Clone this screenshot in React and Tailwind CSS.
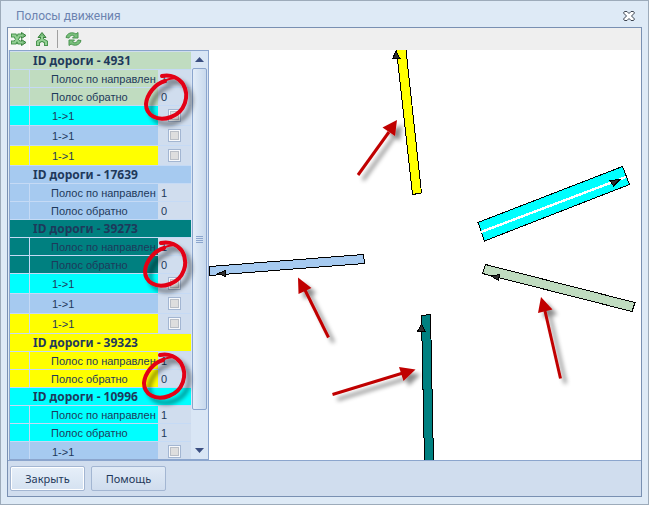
import { useState } from "react";

const GREEN = "bg-[#c0dcc0]";
const CYAN = "bg-[#00ffff]";
const BLUE = "bg-[#a6caf0]";
const YELLOW = "bg-[#ffff00]";
const TEAL = "bg-[#008080]";

const ROADS = [
  { id: 4931, color: GREEN, forward: 1, back: 0, links: [CYAN, BLUE, YELLOW] },
  { id: 17639, color: BLUE, forward: 1, back: 0, links: [] },
  { id: 39273, color: TEAL, forward: 1, back: 0, links: [CYAN, BLUE, YELLOW] },
  { id: 39323, color: YELLOW, forward: 1, back: 0, links: [] },
  { id: 10996, color: CYAN, forward: 1, back: 1, links: [BLUE] },
];

function PropRow({ color, label, value }) {
  return (
    <tr className="h-[18px]">
      <td className={`border-b border-r border-[#c5daf5] ${color}`} />
      <td className={`border-b border-[#c5daf5] pl-[21px] pr-[2px] ${color}`}>
        <div className="overflow-hidden whitespace-nowrap">{label}</div>
      </td>
      <td className="border-b border-[#c5daf5] bg-[#d0ddee] pl-[3px]">{value}</td>
    </tr>
  );
}

function LinkRow({ color, name }) {
  const [on, setOn] = useState(false);
  return (
    <tr className="h-5">
      <td className={`border-b border-r border-[#c5daf5] ${color}`} />
      <td className={`border-b border-[#c5daf5] pl-[22px] ${color}`}>
        <label htmlFor={name}>1-&gt;1</label>
      </td>
      <td className="border-b border-[#c5daf5] bg-[#d0ddee]">
        <input
          id={name}
          type="checkbox"
          checked={on}
          onChange={(e) => setOn(e.target.checked)}
          className="mx-auto block size-[13px] appearance-none border border-[#a3b6d2] bg-[#dedede] shadow-[inset_0_0_0_1px_#f6f8fb,inset_0_0_0_2px_#b9bec6] checked:bg-[#7a90b0]"
        />
      </td>
    </tr>
  );
}

function RoadRows({ road }) {
  return (
    <>
      <tr className="h-[18px]">
        <th colSpan={3} className={`border-b border-[#c5daf5] pl-[23px] text-left font-['Noto_Sans',sans-serif] text-[12px] font-bold ${road.color}`}>
          ID дороги - {road.id}
        </th>
      </tr>
      <PropRow color={road.color} label="Полос по направлени" value={road.forward} />
      <PropRow color={road.color} label="Полос обратно" value={road.back} />
      {road.links.map((color, i) => (
        <LinkRow key={i} color={color} name={`link-${road.id}-${i}`} />
      ))}
    </>
  );
}

function Toolbar() {
  return (
    <div className="flex h-[22px] shrink-0 items-center bg-[#efefef]">
      <button aria-label="Переходы" className="flex h-[22px] w-[22px] items-center justify-center border-r border-white bg-[#f8f8f8]">
        <svg width="17" height="14" viewBox="0 0 17 14" fill="none">
          <path d="M1 3.5H5L9 10.5H12M1 10.5H5L9 3.5H12" stroke="#4a9450" strokeWidth="4" />
          <path d="M11.5 .5L16 3.5L11.5 6.5ZM11.5 7.5L16 10.5L11.5 13.5Z" fill="#75b978" stroke="#38803c" />
          <path d="M2 3.5H5L9 10.5H12.5M2 10.5H5L9 3.5H12.5" stroke="#93d094" strokeWidth="2" />
        </svg>
      </button>
      <button aria-label="Слияние" className="flex h-[22px] w-[23px] items-center justify-center">
        <svg width="14" height="14" viewBox="0 0 14 14" fill="none">
          <path d="M3 14V10L7 7.5L11 10V14M7 8V4" stroke="#4a9450" strokeWidth="4" />
          <path d="M3 5.5L7 .5L11 5.5Z" fill="#75b978" stroke="#38803c" />
          <path d="M3 13V10L7 7.5L11 10V13M7 8V4" stroke="#93d094" strokeWidth="2" />
        </svg>
      </button>
      <div className="ml-1 h-[18px] w-px bg-[#a0a0a0]" />
      <button aria-label="Обновить" className="flex h-[22px] w-[31px] items-center justify-center">
        <svg width="17" height="16" viewBox="0 0 17 16" fill="#79c07c" stroke="#4a9450">
          <path d="M1 6.5C2 2 7 .5 11 3L13 1.5V7H7.5L9.5 5C7 3.5 5 4.5 4 7Z" />
          <path d="M16 9.5C15 14 10 15.5 6 13L4 14.5V9H9.5L7.5 11C10 12.5 12 11.5 13 9Z" />
        </svg>
      </button>
    </div>
  );
}

function RoadMap() {
  return (
    <svg className="min-w-0 flex-1 bg-white" width="100%" height="100%" shapeRendering="crispEdges" stroke="#000">
      <path d="M187.5 0L203.5 144.5L212.5 143L197 0" fill="#ffff00" />
      <path d="M187 1L183.5 9L191 8.5Z" fill="#303030" />
      <path d="M269 172.5L413.5 116.5L420.5 134.5L275.5 191Z" fill="#00ffff" />
      <path d="M272 182L417 127" stroke="#fff" strokeWidth="2.4" />
      <path d="M411 129.5L401 130.5L404.5 136Z" fill="#303030" />
      <path d="M276.5 214.5L426 252.5L423 261.5L273.5 223.5Z" fill="#c0dcc0" />
      <path d="M282 226L290.5 224.5L289.5 230.5Z" fill="#303030" />
      <path d="M.5 216.5L154.5 204.5L155.5 213.5L.5 225.5Z" fill="#a6caf0" />
      <path d="M9 223.5L16.5 220.5V226.5Z" fill="#303030" />
      <path d="M215.5 412L212.5 265.5L221.5 264.5L224.5 412" fill="#008080" />
      <path d="M212.5 274L208.5 281.5H216Z" fill="#303030" />
    </svg>
  );
}

// hand-drawn ring, thick where the stroke starts and thin where it closes
function Ring({ x, y }) {
  return (
    <g transform={`translate(${x} ${y})`} strokeLinecap="round" strokeLinejoin="round">
      <path d="M154 26C163 24 171 28 175 34C182 46 177 62 163 67C149 72 138 65 138 54C139 44 147 34 157 31" strokeWidth="4" />
      <path d="M157 31C160 29 164 28 169 28" strokeWidth="2" />
    </g>
  );
}

function Callouts() {
  return (
    <svg className="pointer-events-none absolute inset-0" width="100%" height="100%">
      <defs>
        <filter id="shade" x="-30%" y="-30%" width="180%" height="180%">
          <feDropShadow dx="5" dy="5" stdDeviation="2" floodColor="#000" floodOpacity="0.45" />
        </filter>
      </defs>
      <g filter="url(#shade)" fill="#c00000" stroke="#c00000">
        <path d="M350 125L381 82" strokeWidth="3" />
        <path d="M389 70L374.5 77.5L387 86Z" stroke="none" />
        <path d="M320.5 287.5L297 240" strokeWidth="3" />
        <path d="M290 227.5L290.5 244L303.5 238Z" stroke="none" />
        <path d="M324.5 344.5L395 323" strokeWidth="3" />
        <path d="M407.5 319.5L391 317L395.5 331Z" stroke="none" />
        <path d="M552.5 328.5L537 261" strokeWidth="3" />
        <path d="M533 247L530 263L544.5 259.5Z" stroke="none" />
      </g>
      <g filter="url(#shade)" fill="none" stroke="#e30613">
        <Ring x={0} y={0} />
        <Ring x={-1} y={167} />
        <Ring x={-2} y={279} />
      </g>
    </svg>
  );
}

function ScrollBar() {
  return (
    <div className="flex w-[17px] shrink-0 flex-col items-center bg-[#d9e6f5]">
      <svg width="9" height="17" viewBox="0 0 9 17"><path d="M0 11L4.5 6L9 11Z" fill="#3b4f81" /></svg>
      <div className="flex w-[15px] flex-1 flex-col items-center justify-center gap-px rounded-xs border border-[#8ba5cd] bg-linear-to-r from-[#e3edf8] to-[#c8d9ed]">
        <div className="h-px w-[7px] bg-[#8ba5cd]" />
        <div className="h-px w-[7px] bg-[#8ba5cd]" />
        <div className="h-px w-[7px] bg-[#8ba5cd]" />
        <div className="h-px w-[7px] bg-[#8ba5cd]" />
      </div>
      <div className="h-8" />
      <svg width="9" height="17" viewBox="0 0 9 17"><path d="M0 6L4.5 11L9 6Z" fill="#3b4f81" /></svg>
    </div>
  );
}

export default function App() {
  return (
    <div className="flex h-screen flex-col overflow-hidden border border-[#9dabba] bg-[#deeaf6] px-[6px] pb-[7px] font-[Roboto,sans-serif] text-[11px] leading-[14px] text-[#1e395b]">
      <header className="flex h-[26px] shrink-0 items-center justify-between pl-[9px] pr-[7px] pt-1">
        <h1 className="text-[12px] text-[#6c83b0]">Полосы движения</h1>
        <button aria-label="Закрыть окно">
          <svg width="12" height="10" viewBox="0 0 12 10" fill="#fff" stroke="#3c4450">
            <path d="M1.5.5H4L6 2.5L8 .5H10.5L11.5 2L8.5 5L11.5 8L10.5 9.5H8L6 7.5L4 9.5H1.5L.5 8L3.5 5L.5 2Z" />
          </svg>
        </button>
      </header>
      <main className="flex min-h-0 flex-1 flex-col border border-[#7990b2]">
        <Toolbar />
        <div className="relative flex min-h-0 flex-1">
          <div className="ml-px flex w-[200px] shrink-0 overflow-hidden border border-[#8ba5cd] bg-[#d0ddee]">
            <div className="min-w-0 flex-1 overflow-hidden pt-px">
              <table className="w-full table-fixed border-separate border-spacing-0 font-['Liberation_Sans',sans-serif]">
                <colgroup>
                  <col className="w-5" />
                  <col />
                  <col className="w-[33px]" />
                </colgroup>
                <tbody>
                  {ROADS.map((road) => <RoadRows key={road.id} road={road} />)}
                </tbody>
              </table>
            </div>
            <ScrollBar />
          </div>
          <RoadMap />
          <Callouts />
        </div>
        <footer className="flex h-9 shrink-0 items-center gap-[6px] border-t border-[#8ba5cd] bg-[#d0ddee] px-[2px] font-['Noto_Sans',sans-serif]">
          <button className="h-[25px] w-[75px] rounded-xs border border-[#a3b6d2] bg-linear-to-b from-[#e6eff9] to-[#d5e2f1] shadow-[inset_0_0_0_1px_#fff]">Закрыть</button>
          <button className="h-[25px] w-[75px] rounded-xs border border-[#a3b6d2] bg-linear-to-b from-[#e0eaf6] to-[#d0ddee]">Помощь</button>
        </footer>
      </main>
    </div>
  );
}
